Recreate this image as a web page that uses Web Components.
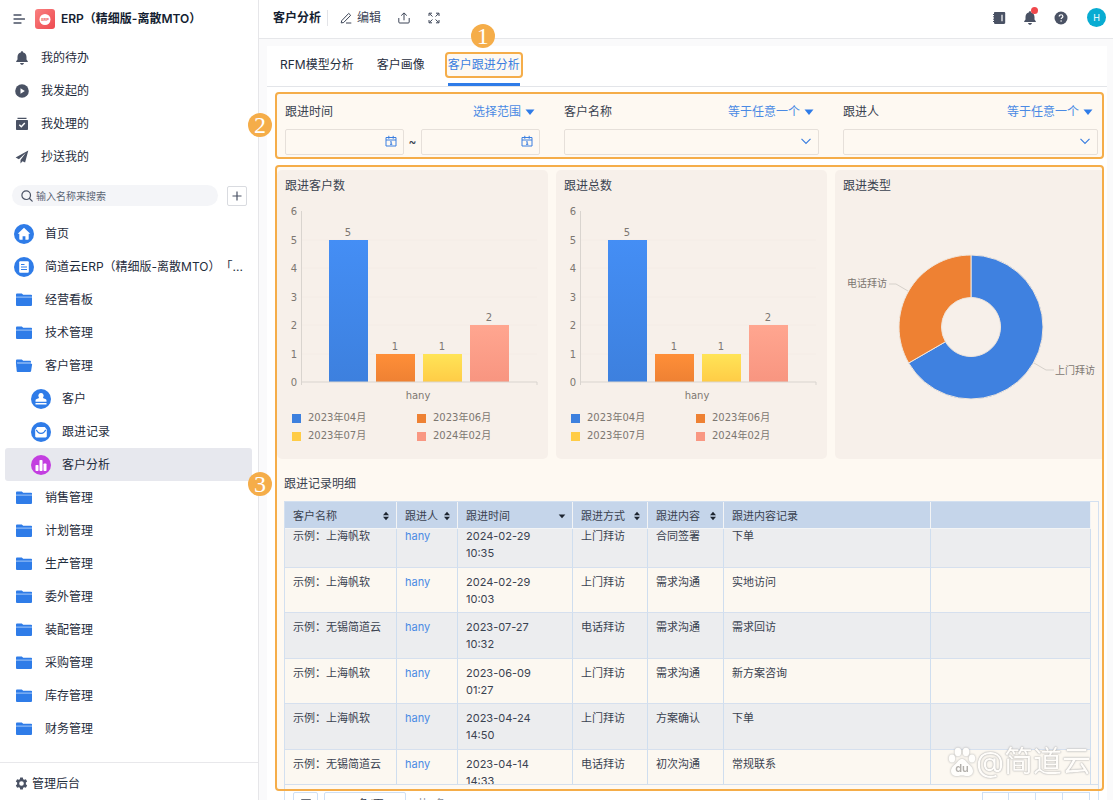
<!DOCTYPE html>
<html lang="zh-CN">
<head>
<meta charset="utf-8">
<meta name="viewport" content="width=device-width, initial-scale=1">
<title>客户分析</title>
<style>
  html, body { margin: 0; height: 100%; }
  body { font-family: Inter, "Noto Sans CJK SC", sans-serif; font-size: 12px; line-height: 20px; text-spacing-trim: space-all; color: #1f2d3d; background: #fff; overflow: hidden; }
</style>
</head>
<body>
<app-shell>
  <side-bar slot="side"></side-bar>
  <top-bar slot="top"></top-bar>
  <tab-strip></tab-strip>
  <note-frame number="2">
    <filter-bar></filter-bar>
  </note-frame>
  <note-frame number="3">
    <chart-row>
      <chart-card heading="跟进客户数"><bar-chart></bar-chart></chart-card>
      <chart-card heading="跟进总数"><bar-chart></bar-chart></chart-card>
      <chart-card heading="跟进类型"><donut-chart></donut-chart></chart-card>
    </chart-row>
    <record-table></record-table>
  </note-frame>
  <pager-bar></pager-bar>
</app-shell>
<water-mark></water-mark>

<script>
const define = (name, render, ready) => customElements.define(name, class extends HTMLElement {
  connectedCallback() {
    if (this.shadowRoot) return;
    const root = this.attachShadow({ mode: 'open' });
    root.innerHTML = '<style>:host,*,::before,::after{box-sizing:border-box}button,input,select{font:inherit;color:inherit;margin:0;padding:0;border:0;background:none}button,select{cursor:pointer}</style>' + render(this);
    if (ready) ready(root, this);
  }
});

/* Icons: [viewBox side, markup] */
const ICONS = {
  menu: [12, '<path d="M1 2h7M1 6h10.500M1 10h7" stroke="currentColor" stroke-width="1.300" stroke-linecap="round"/>'],
  bell: [14, '<path fill="currentColor" d="M7 .3c.7 0 1.200.5 1.200 1.200C10.300 2 11.500 3.700 11.500 6v2.600l1.300 1.700v.7H1.200v-.7l1.300-1.700V6C2.500 3.700 3.700 2 5.800 1.500 5.800.8 6.300.3 7 .3zM5 12h4c-.3 1.200-1 1.800-2 1.800S5.300 13.200 5 12z"/>'],
  play: [14, '<circle cx="7" cy="7" r="6.800" fill="currentColor"/><path d="M5.500 4.200v5.600L9.800 7z" fill="#fff"/>'],
  done: [14, '<path fill="currentColor" d="M2.500.8h9v1.100h-9zM2 2.900h10c.6 0 1 .4 1 1V12c0 .6-.4 1-1 1H2c-.6 0-1-.4-1-1V3.900c0-.6.400-1 1-1z"/><path d="M4.300 7.700l2 2 3.500-3.600" fill="none" stroke="#fff" stroke-width="1.500"/>'],
  send: [14, '<path fill="currentColor" d="M13.300.6L.6 7.500l3.300 1.700 7-6.400-5.400 7.300v3.400l2-2.300 2.600 1.300z"/>'],
  search: [12, '<circle cx="5.200" cy="5.200" r="4.300" fill="none" stroke="currentColor" stroke-width="1.200"/><path d="M8.500 8.500l2.700 2.700" stroke="currentColor" stroke-width="1.200" stroke-linecap="round"/>'],
  plus: [10, '<path d="M5 .5v9M.5 5h9" stroke="currentColor" stroke-width="1.200"/>'],
  gear: [14, '<path fill="currentColor" fill-rule="evenodd" d="M5.600.5h2.800l.4 1.800 1.100.6 1.800-.6 1.400 2.500-1.400 1.200v1.900l1.400 1.300-1.400 2.500-1.800-.6-1.100.6-.4 1.800H5.600l-.4-1.800-1.100-.6-1.800.6L.9 9.200l1.400-1.300V6L.9 4.800l1.400-2.500 1.800.6 1.100-.6zM7 4.500a2.500 2.500 0 100 5 2.500 2.500 0 000-5z"/>'],
  folder: [18, '<path fill="#8fbaf6" d="M1 4h16v8H1z"/><path fill="#2f7ce8" d="M1 5V3.700C1 3 1.500 2.500 2.200 2.500h4.600l1.400 1.200h7.600c.7 0 1.200.400 1.200 1V5.600H1zM1 6.700h16v7c0 .7-.5 1.300-1.300 1.300H2.300C1.500 15 1 14.400 1 13.700z"/>'],
  open: [18, '<path fill="#8fbaf6" d="M1.500 5h14.500v5H1.500z"/><path fill="#2f7ce8" d="M1 5V3.700C1 3 1.500 2.500 2.200 2.500h4.600l1.400 1.200h6.600c.7 0 1.200.4 1.200 1V5.300H1zM2.300 6.700h14.200c.5 0 .7.300.6.7l-1 6.500c-.1.700-.5 1.100-1.200 1.100H2.800c-.7 0-1-.4-1.100-1.100L.9 5.300l1 .0z"/>'],
  home: [20, '<circle cx="10" cy="10" r="10" fill="#2f7ce8"/><path fill="#fff" d="M10 3.800l6.300 6h-1.600v5.300c0 .4-.3.700-.7.700h-2.600v-3.600H8.600v3.600H6c-.4 0-.7-.3-.7-.7V9.800H3.700z"/>'],
  doc: [20, '<circle cx="10" cy="10" r="10" fill="#2f7ce8"/><rect x="5.200" y="4.200" width="9.600" height="11.600" rx="1" fill="#fff"/><path d="M7 7.500h3.500M7 10h6M7 12.500h6" stroke="#2f7ce8"/>'],
  stamp: [20, '<circle cx="10" cy="10" r="10" fill="#2f7ce8"/><path fill="#fff" d="M10 4a2.700 2.700 0 012.300 4.100c-.4.600-.4 1 .1 1.200l1.900.6c.8.3 1.200.8 1.200 1.600v1.300h-11v-1.300c0-.8.4-1.300 1.200-1.600l1.900-.6c.5-.2.5-.6.1-1.200A2.700 2.700 0 0110 4zM4.500 13.900h11v1.500h-11z"/>'],
  mail: [20, '<circle cx="10" cy="10" r="10" fill="#2f7ce8"/><path fill="#fff" d="M6.200 5h7.600l2 2.600v6.600c0 .7-.5 1.200-1.200 1.200H5.400c-.7 0-1.200-.5-1.200-1.200V7.600z"/><path d="M5.200 8L7 10.200c1.600 1.500 4.400 1.500 6 0L14.800 8" fill="none" stroke="#2f7ce8" stroke-width="1.200"/>'],
  chart: [20, '<circle cx="10" cy="10" r="10" fill="#c33ee0"/><rect x="4.500" y="10" width="3" height="6" rx=".8" fill="#fff"/><rect x="8.500" y="5" width="3" height="11" rx=".8" fill="#fff"/><rect x="12.500" y="8.500" width="3" height="7.500" rx=".8" fill="#fff"/>'],
  pencil: [12, '<path d="M1.700 8.700L8.700 1.400l2 1.900-7 7.200-2.500.4zM6 11h5.300" fill="none" stroke="currentColor" stroke-linejoin="round"/>'],
  upload: [12, '<path d="M6 8.300V1M3.200 3.600L6 .9l2.800 2.700M.8 6v4c0 .7.300 1 1 1h8.400c.7 0 1-.3 1-1V6" fill="none" stroke="currentColor"/>'],
  expand: [12, '<path d="M1 4V1.200h3M8 1.200h3V4M11 8v2.800H8M4 10.800H1V8M1.300 1.500l3.200 3M10.700 1.500l-3.200 3M10.700 10.500l-3.200-3M1.300 10.500l3.200-3" fill="none" stroke="currentColor"/>'],
  book: [14, '<path fill="currentColor" d="M3 1h9c.7 0 1.200.5 1.200 1.200v9.600c0 .7-.5 1.200-1.200 1.200H3c-.7 0-1-.5-1-1.200V2.200C2 1.500 2.300 1 3 1z"/><path d="M1 3.500h2M1 5.800h2M1 8.200h2M1 10.500h2" stroke="currentColor"/><path d="M10 3.800v6.400" stroke="#fff" stroke-width="1.200"/>'],
  help: [14, '<circle cx="7" cy="7" r="6.500" fill="currentColor"/><path d="M5.200 5.600c0-2.600 3.700-2.300 3.700-.2 0 1.300-1.800 1.300-1.800 2.700" fill="none" stroke="#fff" stroke-width="1.200"/><circle cx="7.100" cy="10" r=".8" fill="#fff"/>'],
  calendar: [12, '<path d="M1 2.500h10v8.500H1zM1 5h10M3.800 .8v3M8.200 .8v3M5.200 7l1-.6v3M5 9.300h2.300" fill="none" stroke="currentColor"/>'],
  chevron: [12, '<path d="M1.500 3.800L6 8.300l4.500-4.500" fill="none" stroke="currentColor" stroke-width="1.200"/>'],
  caret: [10, '<path fill="currentColor" d="M.5 2.500h9L5 8z"/>'],
  sort: [10, '<path fill="currentColor" d="M5 .8l3 3.400H2zM5 9.200l3-3.400H2z"/>'],
  sortdown: [10, '<path fill="currentColor" d="M1.700 3.500h6.600L5 7.300z"/>'],
  list: [10, '<path d="M1 1h8v8H1zM1 4h8M1 7h8" fill="none" stroke="currentColor" stroke-width="1.500"/>']
};
define('ui-icon', el => {
  const [side, markup] = ICONS[el.getAttribute('name')];
  const size = el.getAttribute('size') || side;
  return `<style>:host{display:block;flex:none;width:${size}px;height:${size}px}svg{display:block}</style>
  <svg width="${size}" height="${size}" viewBox="0 0 ${side} ${side}" fill="none" aria-hidden="true">${markup}</svg>`;
});

define('app-shell', () => `<style>
  :host{display:flex;height:100vh;overflow:hidden}
  main{position:relative;z-index:1;flex:1;min-width:0;display:flex;flex-direction:column}
  .canvas{flex:1;min-height:0;background:#fafafb;padding:7px 6px 0 8px}
  .panel{background:#fff;min-height:100%}
  ::slotted(note-frame){margin:5px 3px 6px 8px}
  ::slotted(note-frame:nth-of-type(2)){margin-bottom:0}
</style>
<slot name="side"></slot>
<main><slot name="top"></slot><div class="canvas"><div class="panel"><slot></slot></div></div></main>`);

define('nav-item', el => `<style>
  :host{display:block}
  a{display:flex;align-items:center;height:33px;margin:0 6px 0 5px;border-radius:3px;color:#1f2d3d;text-decoration:none;white-space:nowrap}
  .i{width:22px;margin-left:8px;margin-right:10px;display:flex;justify-content:center;color:#4a5264}
  :host([quick]) .i{margin-left:6px;margin-right:8px}
  :host([sub]) .i{margin-left:25px}
  :host([current]) a{background:#e7e8ee}
</style>
<a href="#"${el.hasAttribute('current') ? ' aria-current="page"' : ''}><span class="i"><ui-icon name="${el.getAttribute('icon')}"></ui-icon></span><span><slot></slot></span></a>`);

const folders = names => names.map(n => `<nav-item icon="folder">${n}</nav-item>`).join('');
define('side-bar', () => `<style>
  :host{display:flex;flex-direction:column;flex:none;width:259px;border-right:1px solid #e6e6e9;background:#fff}
  header{display:flex;align-items:center;height:37px;padding-left:13px;margin-bottom:4px;color:#4a5264}
  .logo{margin:0 6px 0 10px}
  h1{margin:0;font-size:12px;font-weight:600;color:#141e31;white-space:nowrap}
  .find{display:flex;align-items:center;margin:12px 11px 11px 12px;gap:9px}
  label{flex:1;display:flex;align-items:center;gap:3px;height:21px;border-radius:11px;background:#f4f5f8;padding-left:9px;color:#4a5264}
  input{flex:1;min-width:0;font-size:10px;line-height:20px;outline:0}
  input::placeholder{color:#5c6575;opacity:1}
  .add{width:20px;height:20px;display:grid;place-items:center;border:1px solid #d9dbe0;border-radius:2px;color:#4a5264}
  footer{margin-top:auto;height:38px;border-top:1px solid #e8e8eb;padding:4px 0 0 15px}
  footer a{display:flex;align-items:center;gap:4px;height:33px;color:#1f2d3d;text-decoration:none}
  footer ui-icon{color:#4a5264}
</style>
<header><ui-icon name="menu"></ui-icon>
  <svg class="logo" width="20" height="20" viewBox="0 0 20 20" aria-hidden="true"><defs><linearGradient id="g" x2="1" y2="1"><stop stop-color="#f98080"/><stop offset="1" stop-color="#ee4a50"/></linearGradient></defs><rect width="20" height="20" rx="3" fill="url(#g)"/><circle cx="10" cy="10.500" r="5.500" fill="#fff"/><text x="10" y="12" font-size="4" font-weight="700" text-anchor="middle" fill="#ee6363">ERP</text></svg>
  <h1>ERP（精细版-离散MTO）</h1></header>
<nav>
  <nav-item quick icon="bell">我的待办</nav-item><nav-item quick icon="play">我发起的</nav-item>
  <nav-item quick icon="done">我处理的</nav-item><nav-item quick icon="send">抄送我的</nav-item>
</nav>
<div class="find"><label><ui-icon name="search"></ui-icon><input type="text" placeholder="输入名称来搜索" aria-label="搜索"></label><button class="add" aria-label="新建"><ui-icon name="plus"></ui-icon></button></div>
<nav>
  <nav-item icon="home">首页</nav-item><nav-item icon="doc">简道云ERP（精细版-离散MTO）「...</nav-item>
  ${folders(['经营看板', '技术管理'])}
  <nav-item icon="open">客户管理</nav-item>
  <nav-item sub icon="stamp">客户</nav-item><nav-item sub icon="mail">跟进记录</nav-item><nav-item sub current icon="chart">客户分析</nav-item>
  ${folders(['销售管理', '计划管理', '生产管理', '委外管理', '装配管理', '采购管理', '库存管理', '财务管理'])}
</nav>
<footer><a href="#"><ui-icon name="gear" size="13"></ui-icon>管理后台</a></footer>`);

define('top-bar', () => `<style>
  :host{display:flex;align-items:center;flex:none;height:39px;padding:0 7px 3px 14px;border-bottom:1px solid #e6e7ea;background:#fff;color:#3c4557}
  h2{margin:0;font-size:12px;font-weight:600;color:#141e31}
  i{width:1px;height:16px;background:#e3e4e8;margin:0 12px 0 6px}
  button{display:flex;align-items:center;gap:5px;height:20px}
  .up{margin:0 18px 0 17px}
  .right{margin-left:auto;display:flex;align-items:center;gap:17px;color:#4a5264}
  .bell{position:relative}
  .bell b{position:absolute;top:-1px;right:-1px;width:7px;height:7px;border-radius:50%;background:#f0474b}
  .me{width:19px;height:19px;margin-left:2px;border-radius:50%;background:#08acd2;color:#fff;font-size:9px;justify-content:center}
</style>
<h2>客户分析</h2><i></i>
<button><ui-icon name="pencil"></ui-icon>编辑</button>
<button class="up" aria-label="分享"><ui-icon name="upload"></ui-icon></button>
<button aria-label="全屏"><ui-icon name="expand"></ui-icon></button>
<div class="right"><button aria-label="通讯录"><ui-icon name="book"></ui-icon></button><button class="bell" aria-label="通知"><ui-icon name="bell"></ui-icon><b></b></button><button aria-label="帮助"><ui-icon name="help"></ui-icon></button><button class="me">H</button></div>`);

/* Orange step number laid over the frame it belongs to */
define('step-badge', () => `<style>
  :host{position:absolute;width:24px;height:24px;border-radius:50%;background:#f5ad49;color:#fff;font:24px/24px "Liberation Serif",serif;text-align:center}
</style><slot></slot>`);

define('tab-strip', () => `<style>
  :host{display:flex;align-items:center;gap:23px;height:41px;padding:0 13px 2px;border-bottom:1px solid #e3e5e9}
  button{white-space:nowrap;height:26px}
  .on{position:relative;color:#3b7fe0;background:#fef9f2;border:2px solid #f5ad49;border-radius:4px;padding:0 1px;margin-left:-3px}
  .on::after{content:"";position:absolute;left:1px;right:1px;bottom:-10px;height:3px;background:#2f7ce8}
  step-badge{left:24px;top:-30px}
</style>
<button>RFM模型分析</button><button>客户画像</button><button class="on" aria-current="true">客户跟进分析<step-badge>1</step-badge></button>`);

define('note-frame', el => `<style>
  :host{display:block;position:relative;border:2px solid #f5ad49;border-radius:4px;background:#fef9f2}
  .clip{overflow:hidden;border-radius:2px}
  step-badge{left:-29px;top:${el.getAttribute('number') === '2' ? 19 : 305}px}
</style><div class="clip"><slot></slot></div><step-badge>${el.getAttribute('number')}</step-badge>`);

define('filter-field', el => `<style>
  :host{display:block;min-width:0;padding:8px 8px 2px;color:#3a4250}
  .head{display:flex;justify-content:space-between;margin-bottom:7px}
  .op{display:flex;align-items:center;gap:4px;height:20px;color:#4a8ae4;padding-right:5px}
  .op ui-icon{color:#2f7ce8}
  .row{display:flex;align-items:center;gap:4px}
  .box{position:relative;flex:1;min-width:0;display:flex}
  input,select{width:100%;height:26px;border:1px solid #e6e0da;border-radius:2px;padding:0 6px;appearance:none;background:transparent}
  .box ui-icon{position:absolute;right:7px;top:6px;color:#3b7fe0;pointer-events:none}
  .row>span{width:9px;text-align:center}
</style>
<div class="head"><label for="f">${el.getAttribute('label')}</label><button class="op">${el.getAttribute('op')}<ui-icon name="caret"></ui-icon></button></div>
<div class="row">${el.hasAttribute('range')
  ? '<div class="box"><input id="f" type="text"><ui-icon name="calendar"></ui-icon></div><span>~</span><div class="box"><input type="text" aria-label="结束时间"><ui-icon name="calendar"></ui-icon></div>'
  : '<div class="box"><select id="f"><option></option></select><ui-icon name="chevron"></ui-icon></div>'}</div>`);

/* Filters and charts share the same three tracks; the last one runs on under the frame's edge */
const TRACKS = 'display:grid;grid-template-columns:repeat(3,minmax(0,1fr));gap:8px;margin-right:-4px';
define('filter-bar', () => `<style>:host{${TRACKS}}</style>
<filter-field range label="跟进时间" op="选择范围"></filter-field><filter-field label="客户名称" op="等于任意一个"></filter-field><filter-field label="跟进人" op="等于任意一个"></filter-field>`);
define('chart-row', () => `<style>:host{${TRACKS};padding-top:3px}</style><slot></slot>`);
define('chart-card', el => `<style>
  :host{display:block;background:#f7f0ea;border-radius:5px;min-width:0}
  h3{margin:0;padding:6px 8px 4px;font-size:12px;font-weight:400;line-height:20px;color:#3a4250}
</style><h3>${el.getAttribute('heading')}</h3><slot></slot>`);

const CHART_FONT = 'font-family:"DejaVu Sans","Noto Sans CJK SC",sans-serif;font-size:10px;color:#7d7771';
define('bar-chart', () => {
  const bars = [[5, 52, 'a'], [1, 99, 'b'], [1, 146, 'c'], [2, 193, 'd']];
  const y = v => Math.round(182 - v * 28.5);
  const grad = (id, a, b) => `<linearGradient id="${id}" x2="0" y2="1"><stop stop-color="${a}"/><stop offset="1" stop-color="${b}"/></linearGradient>`;
  return `<style>
  :host{display:block;${CHART_FONT}}
  svg{display:block;width:100%}
  text{fill:#7d7771;text-anchor:middle}
  ul{list-style:none;margin:0;padding:0 0 14px 15px;display:grid;grid-template-columns:125px auto;line-height:18px}
  li{display:flex;align-items:center;gap:7px}
  li::before{content:"";width:9px;height:9px;background:var(--c)}
</style>
<svg viewBox="0 0 271 209" role="img" aria-label="柱状图"><defs>${grad('a', '#448ef5', '#3d80de')}${grad('b', '#ff8f38', '#ee8133')}${grad('c', '#ffe457', '#ffcc46')}${grad('d', '#ffa690', '#f89580')}</defs>
  ${[1, 2, 3, 4, 5].map(v => `<path d="M25 ${y(v)}H260" stroke="#f4ece6"/>`).join('')}
  ${[0, 1, 2, 3, 4, 5, 6].map(v => `<text x="17" y="${y(v) + 4}">${v}</text>`).join('')}
  ${bars.map(([v, x, id]) => `<rect x="${x}" y="${y(v)}" width="39" height="${182 - y(v)}" fill="url(#${id})"/><text x="${x + 19}" y="${y(v) - 4}">${v}</text>`).join('')}
  <path d="M24.500 11v174M24.500 182H260v3" fill="none" stroke="#d9d4cf"/>
  <text x="141" y="199">hany</text>
</svg>
<ul><li style="--c:#3d80de">2023年04月</li><li style="--c:#ee8133">2023年06月</li><li style="--c:#ffcc46">2023年07月</li><li style="--c:#f99782">2024年02月</li></ul>`;
});
define('donut-chart', () => `<style>
  :host{display:block;${CHART_FONT}}
  svg{display:block;width:100%} text{fill:#7d7771}
</style>
<svg viewBox="0 0 271 259" role="img" aria-label="环形图">
  <g stroke="#f0e6dc"><path fill="#3f81e0" d="M136 55A72 72 0 1 1 73.650 163L110.450 141.750A29.500 29.500 0 1 0 136 97.500z"/>
  <path fill="#ee8133" d="M136 55A72 72 0 0 0 73.650 163L110.450 141.750A29.500 29.500 0 0 1 136 97.500z"/></g>
  <path d="M73 91L61 84H54M199 163L211 170H219" fill="none" stroke="#d6d1cb"/>
  <text x="12" y="87">电话拜访</text><text x="220" y="174">上门拜访</text>
</svg>`);

define('record-table', () => {
  const cols = [['客户名称', 112, 'sort'], ['跟进人', 61, 'sort'], ['跟进时间', 115, 'sortdown'], ['跟进方式', 75, 'sort'], ['跟进内容', 76, 'sort'], ['跟进内容记录', 207, ''], ['', 0, '']];
  const rows = [
    ['上海帆软', '2024-02-29', '10:35', '上门拜访', '合同签署', '下单'],
    ['上海帆软', '2024-02-29', '10:03', '上门拜访', '需求沟通', '实地访问'],
    ['无锡简道云', '2023-07-27', '10:32', '电话拜访', '需求沟通', '需求回访'],
    ['上海帆软', '2023-06-09', '01:27', '上门拜访', '需求沟通', '新方案咨询'],
    ['上海帆软', '2023-04-24', '14:50', '上门拜访', '方案确认', '下单'],
    ['无锡简道云', '2023-04-14', '14:33', '电话拜访', '初次沟通', '常规联系']];
  return `<style>
  :host{display:block;padding:15px 3px 0 7px;color:#3a4250}
  h3{margin:0 0 7px;font-size:12px;font-weight:400;line-height:20px}
  .frame{border:1px solid #d3e0f0;border-bottom:0;padding-bottom:4px}
  .scroll{height:283px;overflow-y:auto;scrollbar-width:none;border-bottom:1px solid #d3dfee;padding-right:7px}
  table{width:100%;table-layout:fixed;border-collapse:separate;border-spacing:0;font-size:11px;line-height:17px}
  th{position:sticky;top:0;height:27px;padding:2px 5px 0 8px;background:#c5d5ea;border-right:1px solid #f3f4f5;border-bottom:1px solid #f3f4f5;font-weight:400;text-align:left;white-space:nowrap}
  th div{display:flex;align-items:center;justify-content:space-between}
  th ui-icon{color:#1d2530}
  td{height:46px;padding:6px 8px 0;vertical-align:top;background:#ecedef;border-right:1px solid #cfdeef;border-bottom:1px solid #d6e0ee;white-space:nowrap}
  tr:nth-child(even) td{height:45px;background:#fcf8f1}
  a{color:#4a8ae4;text-decoration:none}
</style>
<h3>跟进记录明细</h3>
<div class="frame"><div class="scroll"><table>
<colgroup>${cols.map(c => `<col${c[1] ? ` style="width:${c[1]}px"` : ''}>`).join('')}</colgroup>
<thead><tr>${cols.map(c => `<th><div>${c[0]}${c[2] ? `<ui-icon name="${c[2]}"></ui-icon>` : ''}</div></th>`).join('')}</tr></thead>
<tbody>${rows.map(r => `<tr><td>示例：${r[0]}</td><td><a href="#">hany</a></td><td>${r[1]}<br>${r[2]}</td><td>${r[3]}</td><td>${r[4]}</td><td>${r[5]}</td><td></td></tr>`).join('')}</tbody>
</table></div></div>`;
}, root => { root.querySelector('.scroll').scrollTop = 7; });

define('pager-bar', () => `<style>
  :host{display:flex;margin:0 8px 0 17px;height:36px;border:solid #d3e3f5;border-width:0 1px;padding:1px 8px 0;gap:6px;font-size:11px;color:#3a4250}
  button{border:1px solid #cfe0f5;border-radius:2px;height:24px;width:25px;display:grid;place-items:center}
  select{appearance:none;border:1px solid #cfe0f5;border-radius:2px;height:24px;width:82px;padding-left:16px}
  span{line-height:24px;margin-left:5px;color:#8b919b}
  nav{margin-left:auto;display:flex}
  nav button{width:27px;border-radius:0}
  nav button+button{border-left:0}
</style>
<button aria-label="列表"><ui-icon name="list"></ui-icon></button>
<select aria-label="每页条数"><option>20 条/页</option></select><span>共6条</span>
<nav><button aria-label="首页"></button><button aria-label="上一页"></button><button aria-label="下一页"></button><button aria-label="末页"></button></nav>`);

define('water-mark', () => `<style>
  :host{position:absolute;right:22px;bottom:20px;z-index:2;display:flex;align-items:center;pointer-events:none}
  span{font:29px/36px Inter,"Noto Sans CJK SC",sans-serif;color:#fffdfa;text-shadow:0 0 1px #aaa,0 0 2px #aaa}
  svg{filter:drop-shadow(0 0 1px #aaa)}
</style>
<svg width="28" height="30" viewBox="0 0 28 30" aria-hidden="true"><g fill="#fffefc"><ellipse cx="4" cy="11.500" rx="3.200" ry="4"/><ellipse cx="10" cy="5" rx="3.300" ry="4.200"/><ellipse cx="18" cy="5" rx="3.300" ry="4.200"/><ellipse cx="24" cy="11.500" rx="3.200" ry="4"/><path d="M14 12c3 0 4 2.500 6 4.500s5 4 5 7.500-2.500 5-5.500 5-3.500-.5-5.500-.5-2.500.5-5.500.5S3 27.500 3 24s3-5.500 5-7.500 3-4.500 6-4.500z"/></g><text x="14" y="25" font-size="11" font-weight="600" text-anchor="middle" fill="#b3b0ac">du</text></svg>
<span>@简道云</span>`);
</script>
</body>
</html>
